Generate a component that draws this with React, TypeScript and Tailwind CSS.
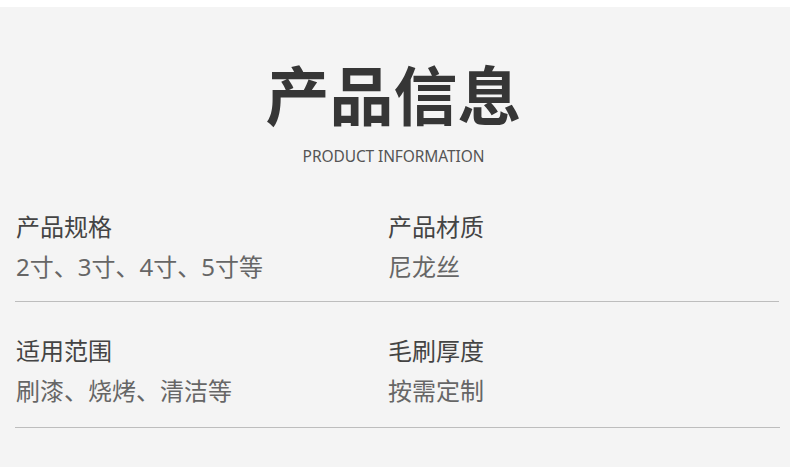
const rows = [
  [
    { label: "产品规格", value: "2寸、3寸、4寸、5寸等" },
    { label: "产品材质", value: "尼龙丝" },
  ],
  [
    { label: "适用范围", value: "刷漆、烧烤、清洁等" },
    { label: "毛刷厚度", value: "按需定制" },
  ],
];

export default function App() {
  return (
    <div
      className="w-[790px] h-[471px] bg-white pt-[7px] overflow-hidden"
      style={{ fontFamily: '"Noto Sans", "Noto Sans CJK SC", sans-serif' }}
    >
      <div className="h-[460px] bg-[#f4f4f4] pt-[57px]">
        {/* Heading */}
        <div className="flex flex-col items-center pr-[3px]">
          <h1 className="text-[64px] leading-[64px] font-bold text-[#363636]">
            产品信息
          </h1>
          <p className="mt-[18px] text-[15.5px] leading-[20px] font-normal text-[#555] tracking-[-0.1px]">
            PRODUCT INFORMATION
          </p>
        </div>

        {/* Spec rows */}
        <div className="mt-[45px] px-[15px]">
          {rows.map((row, i) => (
            <div
              key={i}
              className={`border-b border-[#bdbdbd] ${i === 0 ? "w-[764px] pb-[18px]" : "w-[765px] pt-[33px] pb-[20px]"}`}
            >
              <div className="grid grid-cols-[372px_1fr]">
                {row.map((cell) => (
                  <div key={cell.label} className="pl-[1px]">
                    <div className="text-[24px] leading-[32px] text-[#444]">{cell.label}</div>
                    <div className="mt-[8px] text-[24px] leading-[32px] text-[#666]">{cell.value}</div>
                  </div>
                ))}
              </div>
            </div>
          ))}
        </div>
      </div>
    </div>
  );
}
